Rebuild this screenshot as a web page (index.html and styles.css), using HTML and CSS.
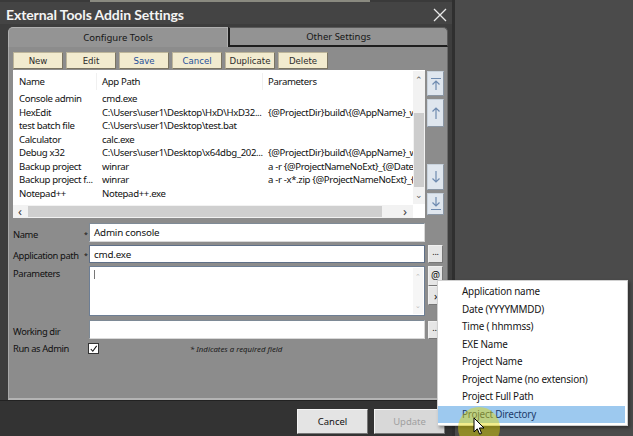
FILE: index.html
```html
<!DOCTYPE html>
<html>
<head>
<meta charset="utf-8">
<link rel="stylesheet" href="styles.css">
</head>
<body>
<div class="screen">
  <div class="topstrip"></div>
  <div class="dialog">
    <div class="titlebar">
      <span class="title">External Tools Addin Settings</span>
      <svg class="close" width="14" height="14" viewBox="0 0 14 14"><path d="M1 1L13 13M13 1L1 13" stroke="#e8e8e8" stroke-width="1.3" fill="none"/></svg>
    </div>
    <div class="body">
      <div class="tabs">
        <div class="tab active">Configure Tools</div>
        <div class="tab">Other Settings</div>
      </div>
      <div class="panel">
        <div class="toolbar">
          <button class="tb">New</button>
          <button class="tb">Edit</button>
          <button class="tb blue">Save</button>
          <button class="tb blue">Cancel</button>
          <button class="tb">Duplicate</button>
          <button class="tb">Delete</button>
        </div>
        <div class="listarea">
          <div class="list">
            <div class="listmain">
              <div class="cols">
                <div class="head">
                  <div class="c1 h">Name</div>
                  <div class="c2 h">App Path</div>
                  <div class="c3 h">Parameters</div>
                </div>
                <div class="rows">
                  <div class="row"><div class="c1">Console admin</div><div class="c2">cmd.exe</div><div class="c3"></div></div>
                  <div class="row"><div class="c1">HexEdit</div><div class="c2">C:\Users\user1\Desktop\HxD\HxD32...</div><div class="c3">{@ProjectDir}build\{@AppName}_w</div></div>
                  <div class="row"><div class="c1">test batch file</div><div class="c2">C:\Users\user1\Desktop\test.bat</div><div class="c3"></div></div>
                  <div class="row"><div class="c1">Calculator</div><div class="c2">calc.exe</div><div class="c3"></div></div>
                  <div class="row"><div class="c1">Debug x32</div><div class="c2">C:\Users\user1\Desktop\x64dbg_202...</div><div class="c3">{@ProjectDir}build\{@AppName}_w</div></div>
                  <div class="row"><div class="c1">Backup project</div><div class="c2">winrar</div><div class="c3">a -r {@ProjectNameNoExt}_{@Date}-</div></div>
                  <div class="row"><div class="c1">Backup project f...</div><div class="c2">winrar</div><div class="c3">a -r -x*.zip {@ProjectNameNoExt}_{@</div></div>
                  <div class="row"><div class="c1">Notepad++</div><div class="c2">Notepad++.exe</div><div class="c3"></div></div>
                </div>
              </div>
              <div class="vscroll">
                <span class="sarrow">&#8963;</span>
                <div class="vthumb"></div>
                <span class="sarrow down">&#8964;</span>
              </div>
            </div>
            <div class="hscroll">
              <span class="harrow">&lsaquo;</span>
              <div class="hthumb"></div>
              <span class="harrow">&rsaquo;</span>
            </div>
          </div>
          <div class="movebtns">
            <div class="mv top"><svg width="14" height="16" viewBox="0 0 14 16"><path d="M2 2.5H12M7 5V14M3.5 8.5L7 5L10.5 8.5" stroke="#6f8bb0" stroke-width="1.2" fill="none"/></svg></div>
            <div class="mv up"><svg width="14" height="16" viewBox="0 0 14 16"><path d="M7 3V14M3.5 6.5L7 3L10.5 6.5" stroke="#6f8bb0" stroke-width="1.2" fill="none"/></svg></div>
            <div class="mvgap"></div>
            <div class="mv dn"><svg width="14" height="16" viewBox="0 0 14 16"><path d="M7 2V13M3.5 9.5L7 13L10.5 9.5" stroke="#6f8bb0" stroke-width="1.2" fill="none"/></svg></div>
            <div class="mv bot"><svg width="14" height="16" viewBox="0 0 14 16"><path d="M7 1V10M3.5 6.5L7 10L10.5 6.5M2 13.5H12" stroke="#6f8bb0" stroke-width="1.2" fill="none"/></svg></div>
          </div>
        </div>
        <div class="form">
          <div class="lbl">Name</div><div class="star">*</div>
          <div class="inp">Admin console</div><div></div>
          <div class="lbl">Application path</div><div class="star">*</div>
          <div class="inp focus">cmd.exe</div><div class="sb">...</div>
          <div class="lbl top">Parameters</div><div></div>
          <div class="inp area"><span class="caret"></span><div class="ascroll"><span>&#8963;</span><span>&#8964;</span></div></div>
          <div class="sbcol"><div class="sb at">@</div><div class="sb gt">&rsaquo;</div></div>
          <div class="lbl">Working dir</div><div></div>
          <div class="inp"></div><div class="sb">...</div>
          <div class="lbl">Run as Admin</div><div></div>
          <div class="chkrow"><span class="chk"><svg width="10" height="10" viewBox="0 0 10 10"><path d="M2 5L4.2 7.5L8.5 1.5" stroke="#111" stroke-width="1.2" fill="none"/></svg></span><span class="note">* Indicates a required field</span></div><div></div>
        </div>
      </div>
      <div class="footer">
        <button class="fb">Cancel</button>
        <button class="fb disabled">Update</button>
      </div>
    </div>
  </div>
  <div class="menu">
    <div class="mi">Application name</div>
    <div class="mi">Date (YYYYMMDD)</div>
    <div class="mi">Time ( hhmmss)</div>
    <div class="mi">EXE Name</div>
    <div class="mi">Project Name</div>
    <div class="mi">Project Name (no extension)</div>
    <div class="mi">Project Full Path</div>
    <div class="mi sel">Project Directory</div>
  </div>
  <div class="halo"></div>
  <svg class="cursor" width="12" height="19" viewBox="0 0 12 19"><path d="M1 1V15L4.3 11.8L6.6 17.2L8.6 16.3L6.4 11H11Z" fill="#fff" stroke="#000" stroke-width="1"/></svg>
</div>
</body>
</html>
```

FILE: styles.css
```css
* { box-sizing: border-box; }
html, body { margin: 0; padding: 0; }
body {
  width: 633px;
  height: 436px;
  overflow: hidden;
  background: #4d4d4d;
  font-family: "Noto Sans", "Open Sans", sans-serif;
}
.screen {
  position: relative;
  width: 633px;
  height: 436px;
  background: #4b4b4b;
}
.topstrip {
  position: absolute;
  left: 90px;
  top: 0;
  width: 280px;
  height: 2px;
  background: #8a8a80;
}
.dialog {
  width: 455px;
  height: 436px;
  background: #3e3e3e;
  border-right: 3px solid #2f2f2f;
  display: flex;
  flex-direction: column;
}
.titlebar {
  height: 24px;
  flex: none;
  display: flex;
  align-items: center;
  justify-content: space-between;
  padding: 2px 6px 0 6px;
  background: #444;
  border-top: 2px solid #3a3a3a;
}
.title {
  font-family: "Lato", sans-serif;
  color: #f4f4f4;
  font-weight: 700;
  font-size: 14px;
  letter-spacing: -0.1px;
}
.close { margin-right: -1px; margin-top: 2px; }
.body {
  flex: 1;
  display: flex;
  flex-direction: column;
  background: #3d3d3d;
  padding: 3px 4px 0 8px;
}
.tabs {
  display: flex;
  height: 20px;
  flex: none;
}
.tab {
  width: 220px;
  display: flex;
  align-items: center;
  justify-content: center;
  font-size: 9.5px;
  color: #161616;
  background: #939393;
  border: 1px solid #5a5a5a;
  border-bottom: 2px solid #1e1e1e;
  border-left: 2px solid #1e1e1e;
  border-radius: 0 5px 0 0;
}
.tab.active {
  border: 1px solid #b0b0b0;
  border-bottom: none;
  border-radius: 5px 0 0 0;
  background: #949494;
}
.panel {
  height: 353px;
  flex: none;
  width: 440px;
  background: #8c8c8c;
  border-left: 1px solid #a8a8a8;
  border-right: 1px solid #6a6a6a;
  border-bottom: 2px solid #b4b4b4;
  padding: 5px 3px 0 4px;
}
.toolbar {
  display: flex;
  gap: 3px;
  height: 17px;
}
.tb {
  width: 50px;
  height: 17px;
  padding: 0;
  font-family: "DejaVu Sans", sans-serif;
  font-size: 8.6px;
  color: #2a2a2a;
  background: #f2ebcf;
  border: 1px solid #bdb59a;
  border-right-color: #7a7462;
  border-bottom-color: #7a7462;
}
.tb.blue { color: #1f4f9a; }
.listarea {
  display: flex;
  gap: 2px;
  margin-top: 1px;
  height: 148px;
}
.list {
  width: 412px;
  background: #fff;
  display: flex;
  flex-direction: column;
  padding-top: 3px;
}
.listmain {
  display: flex;
  height: 132px;
}
.cols {
  width: 400px;
  overflow: hidden;
  font-size: 9.6px;
  letter-spacing: -0.35px;
  color: #111;
}
.head {
  display: flex;
  height: 17px;
  align-items: center;
}
.head .h { height: 17px; line-height: 17px; }
.head .c1 { border-right: 1px solid #f0f0f0; }
.head .c2 { border-right: 1px solid #f0f0f0; }
.c1 { width: 84px; padding-left: 6px; flex: none; white-space: nowrap; }
.c2 { width: 166px; padding-left: 5px; flex: none; white-space: nowrap; }
.c3 { width: 150px; padding-left: 5px; flex: none; white-space: nowrap; overflow: hidden; }
.rows { padding-top: 2px; }
.row { display: flex; height: 13.57px; line-height: 13.57px; }
.vscroll {
  width: 12px;
  background: #f2f2f2;
  display: flex;
  flex-direction: column;
  align-items: center;
  position: relative;
  margin-top: -2px;
}
.sarrow {
  font-size: 9px;
  color: #606060;
  height: 14px;
  line-height: 14px;
  margin-top: 2px;
}
.vthumb {
  width: 10px;
  height: 74px;
  margin-top: 26px;
  background: #cdcdcd;
}
.sarrow.down { margin-top: 1px; }
.hscroll {
  height: 13px;
  margin-top: 1px;
  display: flex;
  align-items: center;
  background: #f2f2f2;
  width: 400px;
}
.harrow {
  width: 14px;
  text-align: center;
  font-size: 13px;
  line-height: 13px;
  color: #444;
}
.hthumb {
  margin-left: 1px;
  width: 354px;
  height: 11px;
  background: #cfcfcf;
  margin-right: 16px;
}
.movebtns {
  width: 18px;
  display: flex;
  flex-direction: column;
  gap: 3px;
  padding-top: 1px;
}
.mv {
  background: #dfe6ee;
  border: 1px solid #c8d2dc;
  border-right-color: #8a96a4;
  border-bottom-color: #8a96a4;
  display: flex;
  align-items: center;
  justify-content: center;
}
.mv.top { height: 25px; }
.mv.up { height: 28px; }
.mvgap { height: 31px; background: #8c8c8c; }
.mv.dn { height: 26px; }
.mv.bot { height: 22px; }
.form {
  margin-top: 5px;
  display: grid;
  grid-template-columns: 72px 4px 336px 18px;
  column-gap: 0;
  align-items: center;
  font-size: 9.8px;
  letter-spacing: -0.2px;
  color: #111;
}
.lbl {
  white-space: nowrap;
  font-size: 9.4px;
  letter-spacing: -0.4px;
}
.lbl.top { align-self: start; padding-top: 1px; }
.star { font-size: 7px; text-align: left; margin-left: -1px; }
.inp {
  height: 19px;
  background: #fff;
  border: 1px solid #d8d8d8;
  border-top-color: #7e8a96;
  border-left-color: #7e8a96;
  padding-left: 4px;
  line-height: 17px;
  margin-bottom: 3px;
}
.inp.focus { border: 1px solid #5f7088; height: 18px; }
.inp.area {
  height: 50px;
  border: 1px solid #6d7e94;
  position: relative;
  margin-bottom: 4px;
}
.caret {
  position: absolute;
  left: 4px;
  top: 3px;
  width: 1px;
  height: 9px;
  background: #777;
}
.ascroll {
  position: absolute;
  right: 1px;
  top: 1px;
  bottom: 1px;
  width: 10px;
  background: #f6f6f6;
  display: flex;
  flex-direction: column;
  justify-content: space-between;
  align-items: center;
  font-size: 7px;
  color: #bbb;
}
.sb {
  margin-left: 3px;
  height: 18px;
  background: #e6e6e6;
  border: 1px solid #f0f0f0;
  border-right-color: #777;
  border-bottom-color: #777;
  font-size: 9px;
  line-height: 12px;
  text-align: center;
  margin-bottom: 3px;
}
.sbcol {
  align-self: start;
  display: flex;
  flex-direction: column;
}
.sb.at { height: 20px; line-height: 17px; margin-bottom: 0; font-size: 10px; }
.sb.gt { height: 19px; line-height: 17px; font-size: 11px; }
.chkrow {
  display: flex;
  align-items: center;
  height: 12px;
  margin-top: 0;
}
.chk {
  width: 11px;
  height: 11px;
  background: #fff;
  border: 1px solid #333;
  margin-left: -1px;
  display: flex;
  align-items: center;
  justify-content: center;
}
.note {
  margin-left: 91px;
  font-size: 7.8px;
  letter-spacing: 0;
  font-style: italic;
  color: #1a1a1a;
}
.footer {
  flex: 1;
  background: #333;
  display: flex;
  justify-content: flex-end;
  align-items: flex-start;
  gap: 6px;
  padding: 8px 2px 0 0;
  margin-left: -8px;
  margin-right: -4px;
  padding-right: 7px;
  border-top: 1px solid #222;
}
.fb {
  width: 71px;
  height: 25px;
  font-family: "Noto Sans", sans-serif;
  font-size: 9.5px;
  color: #111;
  background: #e4e4e4;
  border: 1px solid #f4f4f4;
  border-right-color: #777;
  border-bottom-color: #777;
}
.fb.disabled { color: #a0a0a0; background: #d8d8d8; }
.menu {
  position: absolute;
  left: 437px;
  top: 280px;
  width: 191px;
  height: 146px;
  background: #fff;
  border: 1px solid #d0d0d0;
  box-shadow: 2px 2px 3px rgba(0,0,0,0.35);
  padding: 2px 2px 0 0;
  font-size: 9.9px;
  letter-spacing: -0.2px;
  color: #151515;
}
.mi {
  height: 17.55px;
  line-height: 17.55px;
  padding-left: 24px;
  white-space: nowrap;
}
.mi.sel {
  background: #9dc9ef;
  color: #1b3a6a;
}
.halo {
  position: absolute;
  left: 458px;
  top: 407px;
  width: 42px;
  height: 42px;
  border-radius: 50%;
  background: rgba(228, 218, 0, 0.45);
}
.cursor {
  position: absolute;
  left: 473px;
  top: 417px;
}
```
